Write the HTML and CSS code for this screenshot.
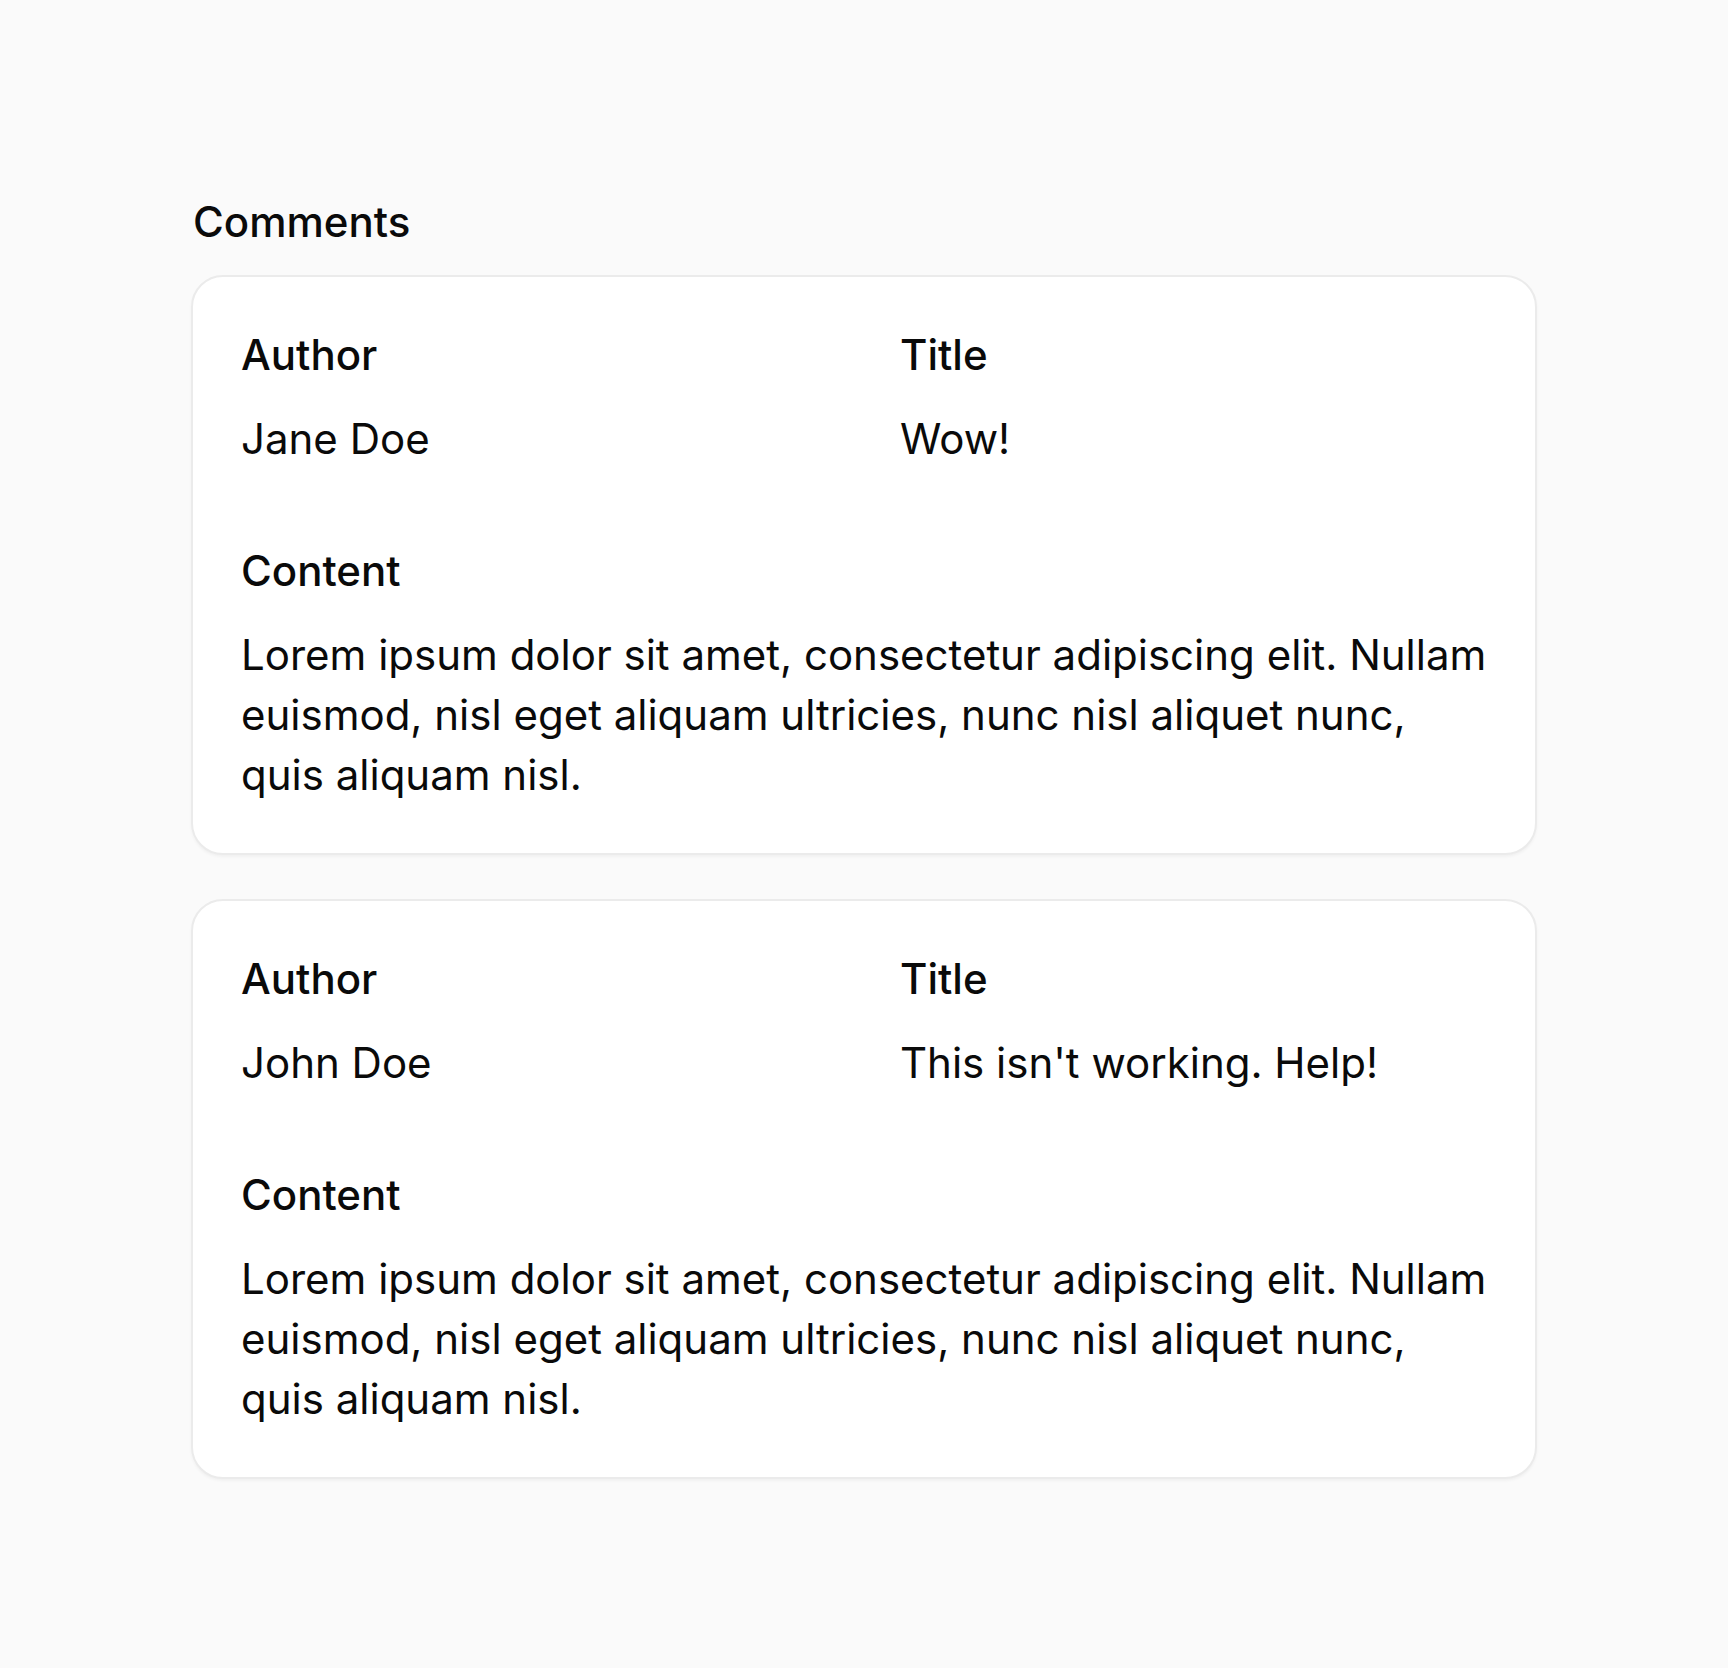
FILE: index.html
```html
<!DOCTYPE html>
<html lang="en">
<head>
<meta charset="utf-8">
<title>Comments</title>
<link rel="stylesheet" href="styles.css">
</head>
<body>
<main class="page">
  <h2 class="heading">Comments</h2>
  <div class="list">
    <article class="card">
      <dl class="fields">
        <div class="field">
          <dt class="label">Author</dt>
          <dd class="value">Jane Doe</dd>
        </div>
        <div class="field">
          <dt class="label">Title</dt>
          <dd class="value">Wow!</dd>
        </div>
        <div class="field wide">
          <dt class="label">Content</dt>
          <dd class="value">Lorem ipsum dolor sit amet, consectetur adipiscing elit. Nullam euismod, nisl eget aliquam ultricies, nunc nisl aliquet nunc, quis aliquam nisl.</dd>
        </div>
      </dl>
    </article>
    <article class="card">
      <dl class="fields">
        <div class="field">
          <dt class="label">Author</dt>
          <dd class="value">John Doe</dd>
        </div>
        <div class="field">
          <dt class="label">Title</dt>
          <dd class="value">This isn't working. Help!</dd>
        </div>
        <div class="field wide">
          <dt class="label">Content</dt>
          <dd class="value">Lorem ipsum dolor sit amet, consectetur adipiscing elit. Nullam euismod, nisl eget aliquam ultricies, nunc nisl aliquet nunc, quis aliquam nisl.</dd>
        </div>
      </dl>
    </article>
  </div>
</main>
</body>
</html>
```

FILE: styles.css
```css
* {
  box-sizing: border-box;
}

html, body {
  margin: 0;
  padding: 0;
  background: #fafafa;
}

body {
  font-family: Inter, "Noto Sans", "Liberation Sans", sans-serif;
  color: #0a0a0a;
  font-size: 42px;
  line-height: 60px;
}

.page {
  width: 1346px;
  margin: 0 auto;
  padding: 192px 0 190px;
}

.heading {
  margin: 0 0 23px;
  padding-left: 2px;
  font-size: 42px;
  line-height: 60px;
  font-weight: 500;
}

.list {
  display: flex;
  flex-direction: column;
  gap: 44px;
}

.card {
  background: #ffffff;
  border: 2px solid #ebebeb;
  border-radius: 32px;
  padding: 48px;
  box-shadow: 0 2px 3px rgba(0, 0, 0, 0.04);
}

.fields {
  margin: 0;
  display: grid;
  grid-template-columns: 1fr 1fr;
  column-gap: 72px;
  row-gap: 72px;
}

.field {
  display: flex;
  flex-direction: column;
  gap: 24px;
}

.field.wide {
  grid-column: 1 / -1;
}

.label {
  font-weight: 500;
}

.value {
  margin: 0;
  font-weight: 400;
}
```
